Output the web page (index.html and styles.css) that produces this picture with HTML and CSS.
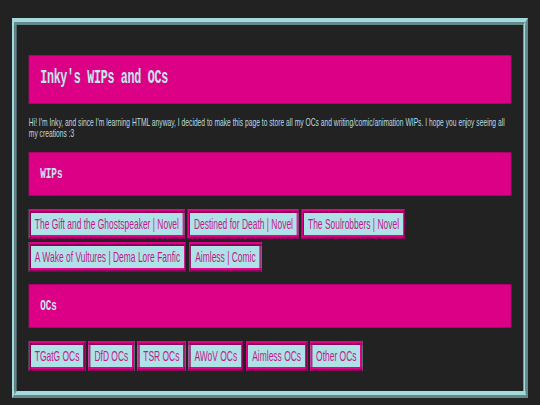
FILE: index.html
```html
<!DOCTYPE html>
<html lang="en">
<head>
<meta charset="utf-8">
<title>Inky's WIPs and OCs</title>
<link rel="stylesheet" href="styles.css">
</head>
<body>
<div class="page">
  <div class="frame">
    <h1 class="banner banner-main">Inky's WIPs and OCs</h1>
    <p class="intro">Hi! I'm Inky, and since I'm learning HTML anyway, I decided to make this page to store all my OCs and writing/comic/animation WIPs. I hope you enjoy seeing all my creations :3</p>
    <h2 class="banner banner-sub">WIPs</h2>
    <div class="links">
      <a class="btn" href="#">The Gift and the Ghostspeaker | Novel</a>
      <a class="btn" href="#">Destined for Death | Novel</a>
      <a class="btn" href="#">The Soulrobbers | Novel</a>
      <a class="btn" href="#">A Wake of Vultures | Dema Lore Fanfic</a>
      <a class="btn" href="#">Aimless | Comic</a>
    </div>
    <h2 class="banner banner-sub">OCs</h2>
    <div class="links">
      <a class="btn" href="#">TGatG OCs</a>
      <a class="btn" href="#">DfD OCs</a>
      <a class="btn" href="#">TSR OCs</a>
      <a class="btn" href="#">AWoV OCs</a>
      <a class="btn" href="#">Aimless OCs</a>
      <a class="btn" href="#">Other OCs</a>
    </div>
  </div>
</div>
</body>
</html>
```
FILE: styles.css
```css
html, body {
  margin: 0;
  padding: 0;
  background: #222222;
  overflow: hidden;
}

.page {
  width: 900px;
  transform: scaleX(0.6);
  transform-origin: 0 0;
  padding: 18px 20px 8px;
  box-sizing: border-box;
}

.frame {
  border-style: ridge;
  border-color: #a2dade;
  border-width: 7px 8px;
  padding: 30px 20px 20px;
  display: flex;
  flex-direction: column;
}

.banner {
  margin: 0;
  background: #dc0087;
  border: 1px solid #b0006b;
  color: #c4e8ec;
  font-family: "Liberation Mono", "Courier New", monospace;
  font-weight: bold;
}

.banner-main {
  font-size: 19.5px;
  letter-spacing: -0.5px;
  line-height: 23px;
  padding: 11px 18px 13px;
}

.banner-sub {
  font-size: 15.5px;
  line-height: 18px;
  padding: 12px 18px;
}

.banner-sub + .links {
  margin-top: 13px;
}

.links + .banner-sub {
  margin-top: 12px;
}

.intro {
  margin: 13px 0 13px;
  font-family: "Liberation Sans", Arial, sans-serif;
  font-size: 11.2px;
  line-height: 11px;
  color: #b8dce0;
}

.links {
  display: flex;
  flex-wrap: wrap;
  gap: 3px 5px;
}

.btn {
  display: block;
  background: #aee2e6;
  border: 4px ridge #e2008c;
  padding: 3px 6px;
  font-family: "Liberation Sans", Arial, sans-serif;
  font-size: 14.1px;
  line-height: 16px;
  color: #c2188a;
  text-decoration: none;
}
```
